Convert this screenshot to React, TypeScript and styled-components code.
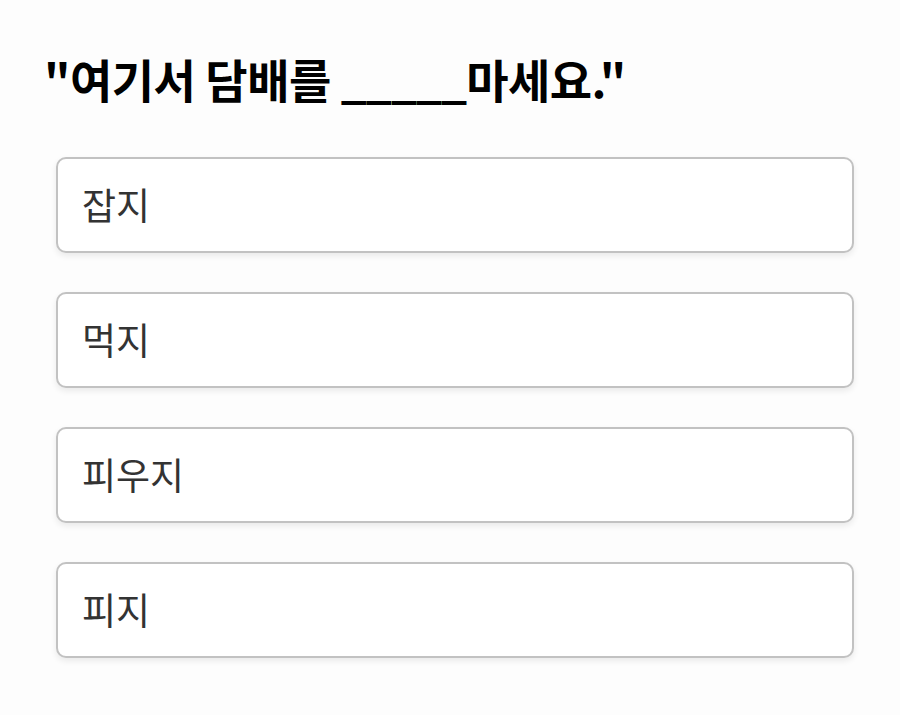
import styled, { createGlobalStyle } from "styled-components";

const GlobalStyle = createGlobalStyle`
  * {
    box-sizing: border-box;
  }
  body {
    margin: 0;
    background: #fdfdfd;
    font-family: "Noto Sans CJK KR", "Noto Sans", sans-serif;
  }
`;

const options = ["잡지", "먹지", "피우지", "피지"];

const App = () => {
  return (
    <>
      <GlobalStyle />
      <Container>
        <Question>
          "여기서 담배를 <Blank>_____</Blank>마세요."
        </Question>
        <OptionList>
          {options.map((option) => (
            <OptionButton key={option}>{option}</OptionButton>
          ))}
        </OptionList>
      </Container>
    </>
  );
};

const Container = styled.div`
  width: 900px;
  height: 715px;
  padding: 44px 46px 0 44px;
  background: #fdfdfd;
`;

const Question = styled.h1`
  margin: 0;
  color: #000;
  font-family: "Noto Sans CJK KR", "Noto Sans", sans-serif;
  font-size: 46px;
  font-weight: 700;
  line-height: 68px;
  letter-spacing: -0.5px;
`;

const Blank = styled.span`
  letter-spacing: -1px;
`;

const OptionList = styled.div`
  display: flex;
  flex-direction: column;
  gap: 39px;
  margin-top: 45px;
  padding-left: 12px;
`;

const OptionButton = styled.button`
  display: flex;
  align-items: center;
  width: 798px;
  height: 96px;
  padding: 0 0 2px 24px;
  border: 2px solid #c2c2c2;
  border-radius: 10px;
  background: #fff;
  box-shadow: 0px 3px 6px rgba(0, 0, 0, 0.08);
  color: #333;
  font-family: "Noto Sans CJK KR", "Noto Sans", sans-serif;
  font-size: 37px;
  font-weight: 400;
  text-align: left;
`;

export default App;
